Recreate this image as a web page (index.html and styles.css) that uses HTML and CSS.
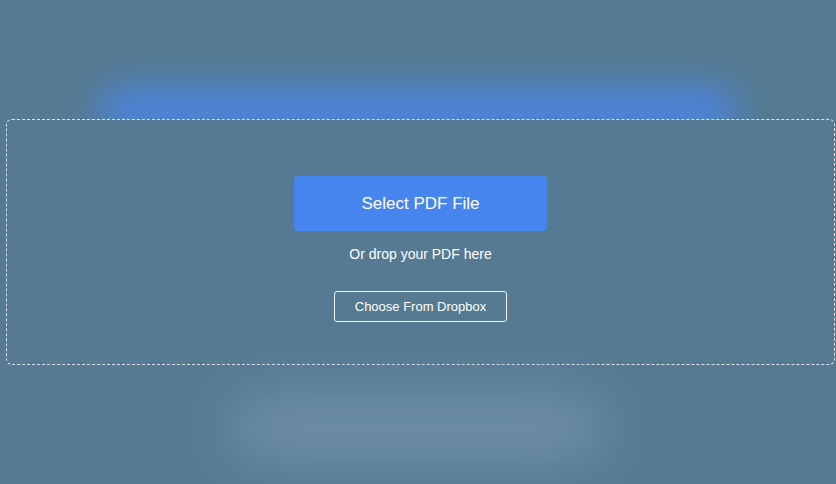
FILE: index.html
```html
<!DOCTYPE html>
<html lang="en">
<head>
    <meta charset="UTF-8">
    <meta name="viewport" content="width=device-width, initial-scale=1.0">
    <title>Upload PDF</title>
    <link rel="stylesheet" href="styles.css">
</head>
<body>
    <div class="page">
        <div class="glow-top"></div>
        <div class="dropzone">
            <button class="select-btn">Select PDF File</button>
            <p class="drop-text">Or drop your PDF here</p>
            <button class="dropbox-btn">Choose From Dropbox</button>
        </div>
        <div class="glow-bottom"></div>
    </div>
</body>
</html>
```

FILE: styles.css
```css
* {
    margin: 0;
    padding: 0;
    box-sizing: border-box;
}

body {
    font-family: "Liberation Sans", Arial, sans-serif;
    background: #557a91;
    height: 100vh;
    overflow: hidden;
    color: #fff;
}

.page {
    display: flex;
    flex-direction: column;
    align-items: center;
}

/* soft blue light above the box */
.glow-top {
    width: 640px;
    height: 48px;
    margin-top: 88px;
    margin-bottom: -17px;
    background: #4a86e8;
    border-radius: 24px;
    filter: blur(18px);
    opacity: 0.9;
}

/* Dashed drop area */
.dropzone {
    position: relative;
    align-self: stretch;
    height: 246px;
    margin: 0 1px 0 6px;
    background: #557a91;
    border: 1px dashed rgba(255, 255, 255, 0.8);
    border-radius: 6px;
    display: flex;
    flex-direction: column;
    align-items: center;
    padding-top: 56px;
}

.select-btn {
    width: 253px;
    height: 55px;
    background: #4785ee;
    color: #fff;
    border: none;
    border-radius: 4px;
    font-family: inherit;
    font-size: 17px;
    cursor: pointer;
}

.drop-text {
    margin-top: 14px;
    font-size: 14px;
    line-height: 18px;
}

.dropbox-btn {
    margin-top: 28px;
    width: 173px;
    height: 31px;
    background: transparent;
    color: #fff;
    border: 1px solid rgba(255, 255, 255, 0.9);
    border-radius: 3px;
    font-family: inherit;
    font-size: 13px;
    cursor: pointer;
}

/* faint light patch under the box */
.glow-bottom {
    width: 380px;
    height: 66px;
    margin-top: 30px;
    background: #7392aa;
    border-radius: 34px;
    filter: blur(28px);
    opacity: 0.9;
}
```
